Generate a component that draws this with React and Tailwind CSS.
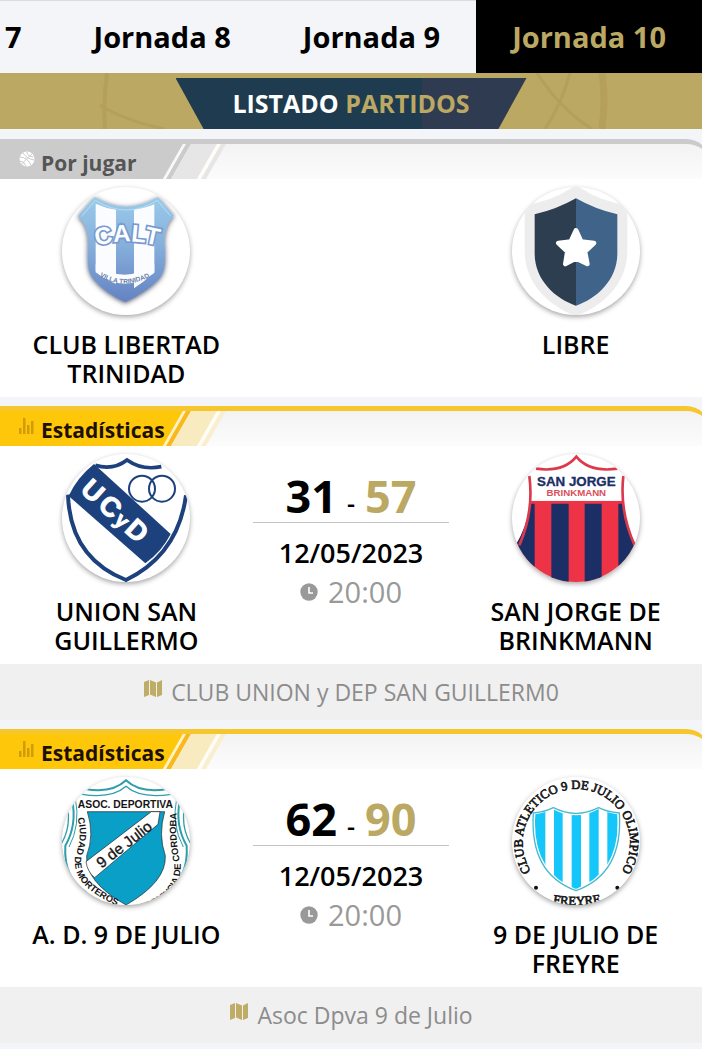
import { useState } from 'react';

const ROUNDS = [7, 8, 9, 10];

function LibertadCrest() {
  return (
    <svg viewBox="36 20 384 384" className="w-full h-full">
      <defs>
        <linearGradient id="calt-blue" x1="0" y1="0" x2="0" y2="1">
          <stop offset="0" stopColor="#9bcbea" />
          <stop offset="0.45" stopColor="#86b0dc" />
          <stop offset="1" stopColor="#6482c2" />
        </linearGradient>
        <filter id="calt-shadow">
          <feDropShadow dx="0" dy="3" stdDeviation="8" floodColor="#3d4656" floodOpacity="0.9" />
        </filter>
        <path id="calt-arc" d="M116 206 Q225 162 348 204" />
        <path id="calt-city" d="M136 280 Q222 338 312 282" />
      </defs>
      <path
        d="M84 108 L134 50 Q228 108 324 50 L372 106 Q345 132 343 180 C348 250 346 275 325 298 Q290 334 226 366 Q165 338 132 298 C108 270 114 240 114 180 Q112 132 84 108Z"
        fill="url(#calt-blue)"
        filter="url(#calt-shadow)"
      />
      <path d="M95 108 L136 60 Q228 118 322 60 L361 106" fill="none" stroke="#b7dcf1" strokeWidth="3" />
      <path d="M137 70 Q168 84 198 88 V310 Q166 300 137 272Z" fill="#fafcff" />
      <path d="M252 88 Q286 84 313 72 V274 Q286 302 252 324Z" fill="#fafcff" />
      <path d="M137 252 Q222 314 313 252 V278 Q222 344 137 276Z" fill="#fafcff" />
      <g fontFamily="Liberation Sans" fontWeight="bold" textAnchor="middle">
        <text fontSize="72" fill="#fdfeff" stroke="#7799cf" strokeWidth="10" paintOrder="stroke">
          <textPath href="#calt-arc" startOffset="50%">CALT</textPath>
        </text>
        <text fontSize="20" fill="#6c7fa6">
          <textPath href="#calt-city" startOffset="50%">VILLA TRINIDAD</textPath>
        </text>
      </g>
    </svg>
  );
}

function LibreCrest() {
  return (
    <svg viewBox="38 20 384 384" className="w-full h-full">
      <path d="M230 14 Q300 64 384 74 V210 C384 320 300 380 230 408 C160 380 76 320 76 210 V74 Q160 64 230 14Z" fill="#ededee" />
      <path d="M230 54 Q290 88 354 102 V220 C354 300 290 356 230 376Z" fill="#3f6389" />
      <path d="M230 54 Q170 88 106 102 V220 C106 300 170 356 230 376Z" fill="#2c3e50" />
      <path
        d="M230 150 L246 184 L284 188 L257 214 L264 251 L230 234 L198 251 L204 214 L177 188 L214 184Z"
        fill="#fff"
        stroke="#fff"
        strokeWidth="14"
        strokeLinejoin="round"
      />
    </svg>
  );
}

function UnionCrest() {
  return (
    <svg viewBox="36 28 384 384" className="w-full h-full">
      <path d="M132 58 L362 268 Q336 320 286 356 L56 154 Q80 100 132 58Z" fill="#1c417d" />
      <path d="M136 62 Q190 78 231 46 Q276 78 334 66" fill="none" stroke="#1c417d" strokeWidth="11" />
      <path d="M54 150 Q60 340 228 406 Q384 330 408 152" fill="none" stroke="#1c417d" strokeWidth="12" />
      <circle cx="276" cy="132" r="39" fill="none" stroke="#1c417d" strokeWidth="6" />
      <circle cx="336" cy="132" r="39" fill="none" stroke="#1c417d" strokeWidth="6" />
      <text
        x="0 70 136 178"
        fontFamily="Liberation Sans"
        fontSize="82"
        fontWeight="bold"
        fill="#fff"
        stroke="#fff"
        strokeWidth="3"
        transform="translate(88 140) rotate(42)"
      >
        UC<tspan fontSize="62">y</tspan>D
      </text>
    </svg>
  );
}

function SanJorgeCrest() {
  return (
    <svg viewBox="38 28 384 384" className="w-full h-full">
      <defs>
        <clipPath id="sj-body">
          <path d="M94 168 H370 Q378 240 408 300 V420 H50 V300 Q86 240 94 168Z" />
        </clipPath>
      </defs>
      <g clipPath="url(#sj-body)">
        <rect x="40" y="166" width="384" height="250" fill="#ee3346" />
        <path
          d="M40 177h66v240H40z M156 177h52v240h-52z M256 177h51v240h-51z M357 177h70v240h-70z"
          fill="#1b2f66"
        />
      </g>
      <g fill="none" stroke="#dc3a4c" strokeWidth="8">
        <path d="M110 72 Q192 84 231 36 Q270 84 354 72" />
        <path d="M90 94 Q104 200 60 302" />
        <path d="M372 94 Q360 200 406 302" />
      </g>
      <g fontFamily="Liberation Sans" fontWeight="bold" textAnchor="middle">
        <text x="231" y="124" fontSize="40" fill="#1b2f66" stroke="#1b2f66">SAN JORGE</text>
        <text x="231" y="154" fontSize="29" fill="#d9505c">BRINKMANN</text>
      </g>
    </svg>
  );
}

function NueveJulioCrest() {
  return (
    <svg viewBox="36 26 384 384" className="w-full h-full">
      <defs>
        <path id="ad-left" d="M82 150 Q98 200 76 264 Q60 350 200 412" />
        <path id="ad-right" d="M240 436 Q396 400 392 290 Q374 210 380 134" />
      </defs>
      <g fill="none" stroke="#2f9dab" strokeWidth="6">
        <path d="M106 62 Q186 76 228 36 Q270 76 352 62" />
        <path d="M96 78 Q186 92 228 54 Q270 92 364 78" strokeWidth="4" />
        <path d="M66 92 Q82 170 46 232 Q40 330 110 372" />
        <path d="M52 112 Q64 176 34 226" strokeWidth="4" />
        <path d="M390 92 Q374 170 410 232 Q416 330 346 372" />
        <path d="M404 112 Q392 176 422 226" strokeWidth="4" />
        <path d="M76 90 Q92 170 57 236" strokeWidth="3" />
        <path d="M380 90 Q364 170 400 236" strokeWidth="3" />
      </g>
      <path d="M112 130 H344 Q324 200 346 262 Q350 340 228 410 Q104 340 110 262 Q134 200 112 130Z" fill="#0a9fc6" stroke="#242424" strokeWidth="2" />
      <path d="M108 280 L304 130 H330 L324 168 L134 328 Q112 310 108 280Z" fill="#fff" stroke="#242424" strokeWidth="2" />
      <g fontFamily="Liberation Sans" fill="#151515">
        <text x="226" y="118" fontSize="31" fontWeight="bold" textAnchor="middle">ASOC. DEPORTIVA</text>
        <text fontSize="46" stroke="#151515" textAnchor="middle" transform="translate(232 241) rotate(-38)">9 de Julio</text>
        <text fontSize="28" fontWeight="bold">
          <textPath href="#ad-left">CIUDAD DE MORTEROS</textPath>
        </text>
        <text fontSize="28" fontWeight="bold" textAnchor="end">
          <textPath href="#ad-right" startOffset="100%">PROVINCIA DE CORDOBA</textPath>
        </text>
      </g>
    </svg>
  );
}

function FreyreCrest() {
  return (
    <svg viewBox="38 26 384 384" className="w-full h-full">
      <defs>
        <clipPath id="fr-shield">
          <path d="M108 138 Q140 132 160 122 Q230 160 298 122 Q320 132 354 138 Q366 310 230 362 Q96 310 108 138Z" />
        </clipPath>
        <path id="fr-ring" d="M104 322 A161 161 0 1 1 358 322" />
        <path id="fr-bottom" d="M130 398 Q230 424 336 396" />
      </defs>
      <g clipPath="url(#fr-shield)" fill="#14c6fa">
        <path d="M100 110h38v260h-38z M164 110h26v260h-26z M217 110h28v260h-28z M270 110h28v260h-28z M324 110h40v260h-40z" />
      </g>
      <path
        d="M102 134 Q140 130 162 118 Q230 152 298 118 Q320 130 360 134 Q372 316 230 367 Q90 316 102 134Z"
        fill="none"
        stroke="#4ab9cc"
        strokeWidth="4"
      />
      <circle cx="110" cy="358" r="6" fill="#111" />
      <circle cx="354" cy="358" r="6" fill="#111" />
      <g fontFamily="Liberation Serif" fill="#161616" stroke="#161616" strokeWidth="2" textAnchor="middle">
        <text fontSize="38">
          <textPath href="#fr-ring" startOffset="50%">CLUB ATLETICO 9 DE JULIO OLIMPICO</textPath>
        </text>
        <text fontSize="38">
          <textPath href="#fr-bottom" startOffset="50%">FREYRE</textPath>
        </text>
      </g>
    </svg>
  );
}

function BallIcon() {
  return (
    <svg viewBox="0 0 16 16" className="w-4 h-4 shrink-0 mb-2">
      <circle cx="8" cy="8" r="7.5" fill="#fff" />
      <path
        d="M1 6 Q8 6 12 14 M4 2 Q8 8 15 9 M13 3 Q8 7 3 13 M8 1 Q8 5 14 6 M1 10 Q5 10 7 15"
        fill="none"
        stroke="#cbcbcb"
        strokeWidth="1"
      />
    </svg>
  );
}

function BarsIcon() {
  return (
    <svg viewBox="0 0 16 18" className="w-4 h-[18px] shrink-0 mb-2">
      <path d="M0 11h2.5v6H0z M4 1h2.5v16H4z M8 8h2.5v9H8z M12 4h2.5v13h-2.5z" fill="#d19b0d" />
    </svg>
  );
}

function MapIcon() {
  return (
    <svg viewBox="0 0 20 19" className="w-5 h-[19px] shrink-0 mb-2">
      <path d="M1 3 L6 1 V16 L1 18Z M7 1 L13 3.5 V18 L7 15.5Z M14 3.5 L19 1 V16 L14 18Z" fill="#bfac67" />
    </svg>
  );
}

function ClockIcon() {
  return (
    <svg viewBox="0 0 18 18" className="w-[18px] h-[18px] shrink-0">
      <circle cx="9" cy="9" r="8.7" fill="#999" />
      <path d="M9 4 V10 H13" fill="none" stroke="#fff" strokeWidth="1.6" />
    </svg>
  );
}

// slanted bands that close the label on its right side
function LabelEdge({ played }) {
  return (
    <svg viewBox="0 0 68 35" className="w-[68px] h-[35px] shrink-0">
      <path d="M0 0 H23 L3 35 H0Z" fill={played ? '#ffc709' : '#cbcbcb'} />
      <path d="M23 0 H26 L6 35 H3Z" fill={played ? '#fff3c4' : '#f8f8f8'} />
      <path d="M26 0 H31 L11 35 H6Z" fill={played ? '#f9b91c' : '#cbcbcb'} />
      <path d="M31 0 H57 L37 35 H11Z" fill={played ? '#f9ebc0' : '#e6e6e6'} />
      <path d="M57 0 H61 L41 35 H37Z" fill="#fffdf6" />
      <path d="M61 0 H66 L46 35 H41Z" fill={played ? '#f9efd0' : '#e6e6e6'} />
    </svg>
  );
}

const MATCHES = [
  {
    id: 1,
    home: { name: 'CLUB LIBERTAD TRINIDAD', crest: LibertadCrest },
    away: { name: 'LIBRE', crest: LibreCrest },
  },
  {
    id: 2,
    home: { name: 'UNION SAN GUILLERMO', crest: UnionCrest },
    away: { name: 'SAN JORGE DE BRINKMANN', crest: SanJorgeCrest },
    score: [31, 57],
    date: '12/05/2023',
    time: '20:00',
    venue: 'CLUB UNION y DEP SAN GUILLERM0',
  },
  {
    id: 3,
    home: { name: 'A. D. 9 DE JULIO', crest: NueveJulioCrest },
    away: { name: '9 DE JULIO DE FREYRE', crest: FreyreCrest },
    score: [62, 90],
    date: '12/05/2023',
    time: '20:00',
    venue: 'Asoc Dpva 9 de Julio',
  },
];

function Team({ team }) {
  const Crest = team.crest;
  return (
    <div className="flex flex-col items-center px-6">
      <div className="w-32 h-32 rounded-full overflow-hidden bg-white shadow-[0_2px_5px_rgba(0,0,0,0.35)]">
        <Crest />
      </div>
      <h3 className="mt-[15px] text-[25px] leading-[29px] font-semibold text-center text-black">{team.name}</h3>
    </div>
  );
}

function Match({ match }) {
  const played = Boolean(match.score);
  return (
    <article>
      <header
        className={`flex items-stretch h-10 -mr-2 border-t-5 rounded-tr-3xl bg-linear-to-b from-[#f3f3f4] to-[#fcfcfc] ${
          played ? 'border-[#f6c62d]' : 'border-[#cbcbcb]'
        }`}
      >
        <div
          className={`relative z-10 flex items-center gap-1.5 w-40 pl-[19px] pt-0.5 whitespace-nowrap text-[21px] leading-7 font-bold ${
            played ? 'bg-[#ffc709] text-[#1c1000]' : 'bg-[#cbcbcb] text-[#555]'
          }`}
        >
          {played ? <BarsIcon /> : <BallIcon />}
          {played ? <a href="#estadisticas">Estadísticas</a> : <span>Por jugar</span>}
        </div>
        <LabelEdge played={played} />
      </header>

      <div className="grid grid-cols-[9fr_7fr_9fr] min-h-[218px] pt-2 pb-2 bg-white">
        <Team team={match.home} />
        <div className="flex flex-col items-center">
          {played && (
            <>
              <p className="flex items-baseline justify-center gap-2.5 w-full h-[69px] pt-2 border-b border-[#c4c4c4] text-[45px] leading-[68px] font-bold text-black">
                <span>{match.score[0]}</span>
                <span className="text-[25px] font-semibold">-</span>
                <span className="text-[#bba863]">{match.score[1]}</span>
              </p>
              <p className="mt-3 text-[27px] leading-9 font-semibold text-black">{match.date}</p>
              <p className="flex items-center gap-2.5 text-[29px] leading-[42px] text-[#999]">
                <ClockIcon />
                {match.time}
              </p>
            </>
          )}
        </div>
        <Team team={match.away} />
      </div>

      {match.venue && (
        <p className="flex items-center justify-center gap-2 h-14 bg-[#f0f0f0] text-[23px] text-[#8c8c8c]">
          <MapIcon />
          {match.venue}
        </p>
      )}
    </article>
  );
}

export default function App() {
  const [round, setRound] = useState(10);

  return (
    <div className="min-h-screen overflow-hidden bg-[#f4f5f9] font-['Open_Sans',sans-serif]">
      <nav className="flex justify-end h-[73px] overflow-hidden">
        {ROUNDS.map((n) => (
          <button
            key={n}
            type="button"
            onClick={() => setRound(n)}
            className={`shrink-0 px-9 text-[29px] font-bold ${
              round === n ? 'bg-black text-[#bba863]' : 'bg-[#f4f5f9] text-black border-t border-[#dcdce0]'
            }`}
          >
            Jornada {n}
          </button>
        ))}
      </nav>

      <div className="relative flex justify-center pt-[5px] h-14 bg-[#bba863]">
        {/* faint basketball seams */}
        <svg viewBox="0 0 702 56" className="absolute inset-0 w-full h-full" fill="none" stroke="#b5a05a">
          <path d="M107 0 Q103 28 105 56" strokeWidth="4" />
          <path d="M100 32 Q125 48 165 56" strokeWidth="3" />
          <path d="M537 0 Q560 36 592 56 M570 0 Q562 30 545 56" strokeWidth="3" />
          <path d="M602 0 Q606 28 602 56" strokeWidth="7" />
        </svg>
        <h2 className="relative flex items-center justify-center w-1/2 bg-linear-to-r from-[#1e3b4f] from-70% to-[#2f3b50] to-70% [clip-path:polygon(0_0,100%_0,92%_100%,8%_100%)] text-[25px] font-bold text-white">
          <span>
            LISTADO <span className="text-[#bba863]">PARTIDOS</span>
          </span>
        </h2>
      </div>

      <main className="flex flex-col gap-[9px] pt-2.5">
        {MATCHES.map((m) => (
          <Match key={m.id} match={m} />
        ))}
      </main>
    </div>
  );
}
